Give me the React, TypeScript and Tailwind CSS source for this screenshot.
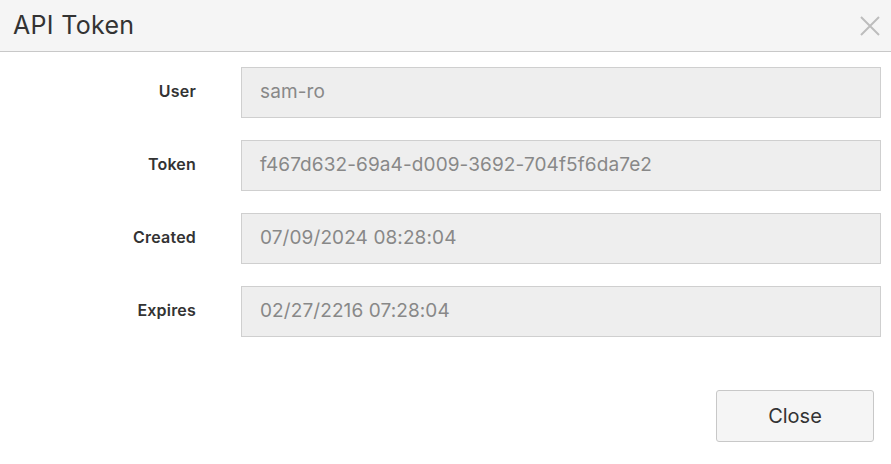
import React from "react";

const rows = [
  { label: "User", value: "sam-ro" },
  { label: "Token", value: "f467d632-69a4-d009-3692-704f5f6da7e2" },
  { label: "Created", value: "07/09/2024 08:28:04" },
  { label: "Expires", value: "02/27/2216 07:28:04" },
];

export default function App() {
  return (
    <div
      className="w-[891px] h-[464px] bg-white text-[#333] flex flex-col"
      style={{ fontFamily: "Inter, 'Noto Sans', sans-serif" }}
    >
      <div className="h-[52px] bg-[#f5f5f5] border-b border-[#c8c8c8] flex items-center justify-between pl-[13px] pr-[10px]">
        <h1 className="text-[25px] font-normal tracking-[0.3px] text-[#333]">API Token</h1>
        <button className="w-[22px] h-[22px] flex items-center justify-center text-[#bdbdbd]">
          <svg width="20" height="20" viewBox="0 0 20 20" fill="none" stroke="currentColor" strokeWidth="2">
            <path d="M1 1 L19 19 M19 1 L1 19" />
          </svg>
        </button>
      </div>
      <div className="flex flex-col gap-[22px] pt-[15px] pl-[10px] pr-[10px]">
        {rows.map((r) => (
          <div key={r.label} className="flex items-start">
            <label className="w-[186px] text-right text-[16px] font-semibold pt-[12px] tracking-[0.2px] text-[#333]">
              {r.label}
            </label>
            <div className="ml-[45px] w-[640px] h-[51px] bg-[#eeeeee] border border-[#cfcfcf] flex items-center pl-[18px] text-[19px] tracking-[0.1px] text-[#888]">
              {r.value}
            </div>
          </div>
        ))}
      </div>
      <div className="flex justify-end pr-[17px] pt-[53px]">
        <button className="w-[158px] h-[52px] bg-[#f5f5f5] border border-[#c8c8c8] rounded-[3px] text-[20px] text-[#333]">
          Close
        </button>
      </div>
    </div>
  );
}
